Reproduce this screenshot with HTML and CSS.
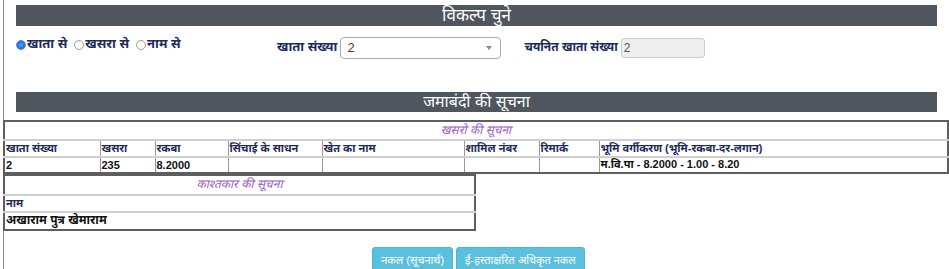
FILE: index.html
```html
<!DOCTYPE html>
<html lang="hi">
<head>
<meta charset="utf-8">
<title>जमाबंदी</title>
<link rel="stylesheet" href="styles.css">
</head>
<body>
<div class="page">
  <div class="inner">
    <div class="bar bar-top">विकल्प चुने</div>
    <div class="form-row">
      <div class="radios">
        <label class="radio"><span class="dot checked"></span>खाता से</label>
        <label class="radio"><span class="dot"></span>खसरा से</label>
        <label class="radio"><span class="dot"></span>नाम से</label>
      </div>
      <span class="lbl">खाता संख्या</span>
      <div class="select"><span>2</span><span class="arrow"></span></div>
      <span class="lbl lbl2">चयनित खाता संख्या</span>
      <div class="input-dis">2</div>
    </div>
    <div class="bar bar-mid">जमाबंदी की सूचना</div>
  </div>

  <table class="grid grid-khasra">
    <colgroup>
      <col style="width:96px"><col style="width:55px"><col style="width:73px"><col style="width:94px">
      <col style="width:142px"><col style="width:75px"><col style="width:60px"><col>
    </colgroup>
    <tr class="cap"><td colspan="8">खसरो की सूचना</td></tr>
    <tr class="head">
      <td>खाता संख्या</td><td>खसरा</td><td>रकबा</td><td>सिंचाई के साधन</td>
      <td>खेत का नाम</td><td>शामिल नंबर</td><td>रिमार्क</td><td>भूमि वर्गीकरण (भूमि-रकबा-दर-लगान)</td>
    </tr>
    <tr class="data">
      <td>2</td><td class="ind">235</td><td>8.2000</td><td></td>
      <td></td><td></td><td></td><td class="ind">म.वि.पा - 8.2000 - 1.00 - 8.20</td>
    </tr>
  </table>

  <table class="grid grid-owner">
    <tr class="cap cap2"><td>काश्तकार की सूचना</td></tr>
    <tr class="head"><td>नाम</td></tr>
    <tr class="data data2"><td>अखाराम पुत्र खेमाराम</td></tr>
  </table>

  <div class="buttons">
    <button class="btn">नकल (सूचनार्थ)</button>
    <button class="btn">ई-हस्ताक्षरित अधिकृत नकल</button>
  </div>
</div>
</body>
</html>
```

FILE: styles.css
```css
html, body {
  margin: 0;
  padding: 0;
  background: #fff;
  font-family: "Liberation Sans", Arial, "Noto Sans Devanagari", "Noto Sans", sans-serif;
  overflow: hidden;
}
.page {
  margin-left: 3px;
  border-left: 1px solid #8a8a8a;
  height: 269px;
  box-sizing: border-box;
  padding-top: 5px;
}
.inner {
  padding: 0 12px;
}
.bar {
  background: #50565e;
  color: #fff;
  text-align: center;
  font-size: 17px;
  line-height: 21px;
  height: 21px;
}
.bar-mid {
  margin-top: 34px;
  font-size: 16px;
  line-height: 20px;
  height: 20px;
}
.form-row {
  display: flex;
  align-items: center;
  margin-top: 11px;
  height: 21px;
}
.radios {
  width: 261px;
  display: flex;
  align-items: center;
  gap: 7px;
  margin-top: -6px;
}
.radio {
  display: flex;
  align-items: center;
  color: #1d2b5c;
  font-weight: bold;
  font-size: 13px;
}
.dot {
  width: 10px;
  height: 10px;
  border-radius: 50%;
  border: 1px solid #a0a0a0;
  box-sizing: border-box;
  margin-right: 1px;
  background: #fff;
}
.dot.checked {
  border: 1px solid #4a86d8;
  background: radial-gradient(circle at 50% 50%, #6aa8f0 0, #2f7be0 45%, #1f66c8 100%);
}
.lbl {
  color: #1d2b5c;
  font-weight: bold;
  font-size: 13px;
  margin-right: 3px;
}
.lbl2 {
  margin-left: 23px;
  margin-right: 3px;
  font-size: 12px;
}
.select {
  width: 161px;
  height: 22px;
  box-sizing: border-box;
  border: 1px solid #aaa;
  border-radius: 4px;
  display: flex;
  align-items: center;
  justify-content: space-between;
  padding: 0 8px 0 6px;
  font-size: 13px;
  color: #444;
}
.arrow {
  width: 0;
  height: 0;
  border-left: 3px solid transparent;
  border-right: 3px solid transparent;
  border-top: 4px solid #888;
}
.input-dis {
  width: 84px;
  height: 20px;
  box-sizing: border-box;
  background: #eee;
  border: 1px solid #ccc;
  border-radius: 3px;
  font-size: 12px;
  color: #555;
  padding-left: 2px;
  line-height: 18px;
}
.grid {
  border-collapse: collapse;
  margin-left: -1px;
  border: 2px solid #5e5e5e;
  table-layout: fixed;
  font-size: 11px;
}
.grid-khasra {
  width: calc(100% + 1px);
  margin-top: 8px;
}
.grid-owner {
  width: 473px;
}
.grid td {
  border-left: 1px solid #999;
  border-top: 2px solid #cfcfcf;
  padding: 0 1px;
  white-space: nowrap;
  overflow: hidden;
  vertical-align: middle;
}
.cap td {
  text-align: center;
  color: #9b59c6;
  font-style: italic;
  font-size: 12px;
  height: 17px;
  border-top: none;
}
.cap2 td {
  height: 18px;
  font-size: 12px;
}
.head td {
  color: #1d2b5c;
  font-weight: bold;
  height: 15px;
}
.data td {
  color: #111;
  font-weight: bold;
  height: 14px;
}
.data2 td {
  height: 16px;
  font-size: 12px;
}
.ind {
  padding-left: 5px;
}
.buttons {
  display: flex;
  justify-content: center;
  gap: 3px;
  margin-top: 16px;
  padding-left: 4px;
}
.btn {
  background: #5bc0de;
  border: 1px solid #46b8da;
  border-radius: 3px;
  color: #fff;
  font-family: inherit;
  font-size: 11px;
  height: 27px;
  padding: 0 8px;
}
```
